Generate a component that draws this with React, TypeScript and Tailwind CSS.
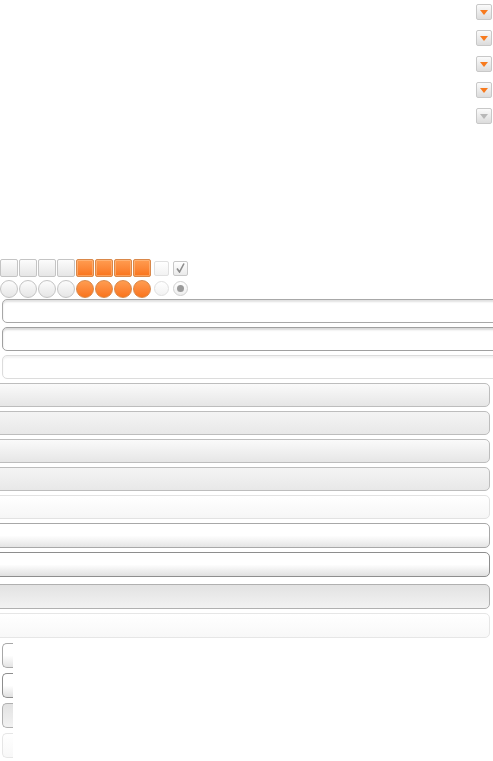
import React from 'react';

// 下拉按钮：小方框 + 橙色三角
const Drop: React.FC<{ off?: boolean }> = ({ off }) => (
  <div className="w-[16px] h-[16px] rounded-[2px] border border-[#c8c8c8] bg-gradient-to-b from-[#fbfbfb] to-[#dcdcdc] flex items-center justify-center">
    <svg width="8" height="5" viewBox="0 0 8 5">
      <path d="M0 0H8L4 5Z" fill={off ? '#b8b8b8' : '#f77a1e'} />
    </svg>
  </div>
);

const Box: React.FC<{ on?: boolean }> = ({ on }) => (
  <div
    className={
      on
        ? 'w-[18px] h-[18px] rounded-[2px] border border-[#d9884a] bg-gradient-to-b from-[#ff9c50] to-[#f9741a] shadow-[inset_0_0_0_1px_rgba(255,200,150,0.5)]'
        : 'w-[18px] h-[18px] rounded-[2px] border border-[#c4c4c4] bg-gradient-to-b from-[#fcfcfc] to-[#e6e6e6]'
    }
  />
);

const Round: React.FC<{ on?: boolean }> = ({ on }) => (
  <div
    className={
      on
        ? 'w-[18px] h-[18px] rounded-full border border-[#d9884a] bg-gradient-to-b from-[#ff9c50] to-[#f9741a]'
        : 'w-[18px] h-[18px] rounded-full border border-[#c4c4c4] bg-gradient-to-b from-[#fcfcfc] to-[#e6e6e6]'
    }
  />
);

const btn = 'h-[24px] w-[511px] -ml-[21px] rounded-[5px] border';

export default function App() {
  return (
    <div className="w-[493px] h-[761px] overflow-hidden bg-white" style={{ fontFamily: '"Liberation Sans", Arial, sans-serif' }}>
      {/* 下拉按钮列 */}
      <div className="flex flex-col items-end gap-[10px] pt-[4px] pr-[1px]">
        <Drop />
        <Drop />
        <Drop />
        <Drop />
        <Drop off />
      </div>

      {/* 复选框 */}
      <div className="mt-[135px] flex items-center gap-[1px] h-[18px]">
        <Box />
        <Box />
        <Box />
        <Box />
        <Box on />
        <Box on />
        <Box on />
        <Box on />
        <div className="ml-[2px] w-[15px] h-[15px] rounded-[2px] border border-[#e0e0e0] bg-gradient-to-b from-white to-[#f2f2f2]" />
        <div className="ml-[3px] w-[15px] h-[15px] rounded-[2px] border border-[#c8c8c8] bg-gradient-to-b from-white to-[#eaeaea] flex items-center justify-center">
          <svg width="9" height="10" viewBox="0 0 9 10">
            <path d="M1 5.5L3.5 9L8 0.5" stroke="#8c8c8c" strokeWidth="1.6" fill="none" />
          </svg>
        </div>
      </div>

      {/* 单选框 */}
      <div className="mt-[3px] flex items-center gap-[1px] h-[17px]">
        <Round />
        <Round />
        <Round />
        <Round />
        <Round on />
        <Round on />
        <Round on />
        <Round on />
        <div className="ml-[2px] w-[15px] h-[15px] rounded-full border border-[#e0e0e0] bg-gradient-to-b from-white to-[#f2f2f2]" />
        <div className="ml-[3px] w-[15px] h-[15px] rounded-full border border-[#d0d0d0] bg-gradient-to-b from-white to-[#eeeeee] flex items-center justify-center">
          <div className="w-[7px] h-[7px] rounded-full bg-[#9a9a9a]" />
        </div>
      </div>

      {/* 输入框 */}
      <div className="mt-[2px] ml-[2px] flex flex-col gap-[4px]">
        <div className="h-[24px] w-[520px] rounded-[5px] border border-[#a8a8a8] bg-white shadow-[inset_0_2px_2px_rgba(0,0,0,0.12)]" />
        <div className="h-[24px] w-[520px] rounded-[5px] border border-[#a0a0a0] bg-white shadow-[inset_0_2px_2px_rgba(0,0,0,0.15)]" />
        <div className="h-[24px] w-[520px] rounded-[5px] border border-[#dcdcdc] bg-white shadow-[inset_0_2px_2px_rgba(0,0,0,0.05)]" />
      </div>

      {/* 按钮 */}
      <div className="mt-[4px] flex flex-col">
        <div className={`${btn} border-[#bdbdbd] bg-gradient-to-b from-[#fafafa] to-[#e6e6e6]`} />
        <div className={`${btn} mt-[4px] border-[#bdbdbd] bg-gradient-to-b from-[#f4f4f4] to-[#e8e8e8]`} />
        <div className={`${btn} mt-[4px] border-[#bdbdbd] bg-gradient-to-b from-[#fafafa] to-[#e6e6e6]`} />
        <div className={`${btn} mt-[4px] border-[#bdbdbd] bg-gradient-to-b from-[#f4f4f4] to-[#e8e8e8]`} />
        <div className={`${btn} mt-[4px] border-[#e2e2e2] bg-gradient-to-b from-white to-[#f6f6f6]`} />
        <div className={`${btn} mt-[4px] h-[25px] border-[#a8a8a8] bg-gradient-to-b from-white via-white to-[#e4e4e4]`} />
        <div className={`${btn} mt-[4px] h-[25px] border-[#8e8e8e] bg-gradient-to-b from-white via-white to-[#e0e0e0]`} />
        <div className={`${btn} mt-[7px] h-[25px] border-[#b0b0b0] bg-gradient-to-b from-[#e2e2e2] to-[#f2f2f2]`} />
        <div className={`${btn} mt-[4px] h-[25px] border-[#e6e6e6] bg-gradient-to-b from-white to-[#f8f8f8]`} />
      </div>

      {/* 底部小按钮 */}
      <div className="mt-[5px] ml-[2px] flex flex-col gap-[5px]">
        <div className="w-[11px] h-[25px] rounded-l-[5px] border border-r-0 border-[#a8a8a8] bg-gradient-to-b from-white via-white to-[#e4e4e4]" />
        <div className="w-[11px] h-[25px] rounded-l-[5px] border border-r-0 border-[#8e8e8e] bg-gradient-to-b from-white via-white to-[#e0e0e0]" />
        <div className="w-[11px] h-[25px] rounded-l-[5px] border border-r-0 border-[#b0b0b0] bg-gradient-to-b from-[#e2e2e2] to-[#f2f2f2]" />
        <div className="w-[11px] h-[25px] rounded-l-[5px] border border-r-0 border-[#e6e6e6] bg-gradient-to-b from-white to-[#f8f8f8]" />
      </div>
    </div>
  );
}
